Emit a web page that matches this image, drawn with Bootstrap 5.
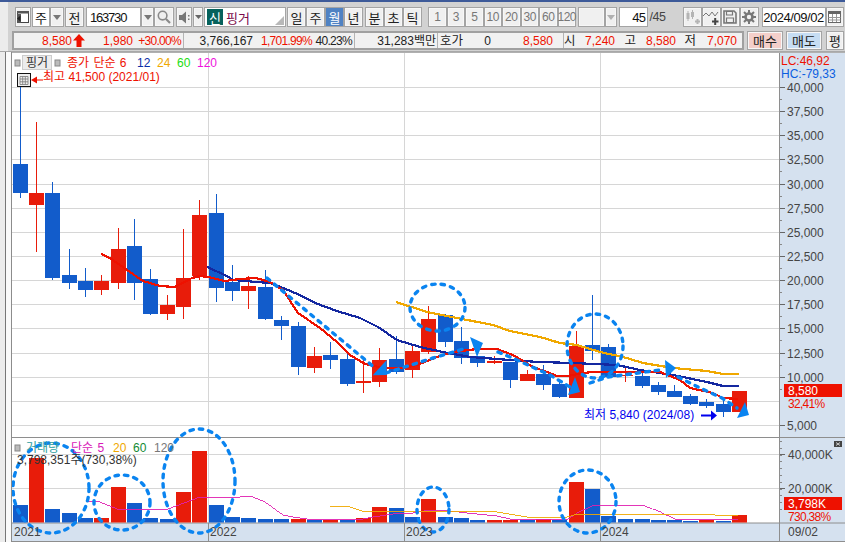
<!DOCTYPE html>
<html lang="ko">
<head>
<meta charset="utf-8">
<title>차트</title>
<link href="https://cdn.jsdelivr.net/npm/bootstrap@5.3.0/dist/css/bootstrap.min.css" rel="stylesheet">
<style>
html,body{width:845px;height:542px;overflow:hidden;margin:0;background:#d2d2d2}
body{font:12px/1 "Liberation Sans","Noto Sans CJK KR",sans-serif;color:#222}
.hts-topline{height:2px;background:#3d5a99}
.hts-head{height:49px;background:#d2d2d2}
.hts-sidehead{width:8px;background:#ececec}
.hts-bars{padding-top:5px;padding-left:7px;gap:4px;min-width:0}
.hts-tools{height:20px}
.hts-b{--bs-btn-padding-x:0;--bs-btn-padding-y:0;--bs-btn-font-size:13px;--bs-btn-border-radius:0;--bs-btn-bg:#f0f0f0;--bs-btn-border-color:#a4a4a4;--bs-btn-color:#222;--bs-btn-hover-bg:#f0f0f0;--bs-btn-hover-border-color:#a4a4a4;--bs-btn-line-height:1;height:20px;width:19px;flex:none;display:flex;align-items:center;justify-content:center;border-width:1px;box-shadow:inset 0 0 0 1px #f7f7f7;font-family:"Noto Sans CJK KR",sans-serif}
.hts-w16{width:16px}.hts-w14{width:14px}.hts-w13{width:13px}.hts-w10{width:10px}.hts-w20{width:20px}.hts-w18{width:18.5px}.hts-w27{width:27px}.hts-w12{width:12px}
.hts-on{--bs-btn-bg:#4f82c3;--bs-btn-color:#fff;--bs-btn-hover-bg:#4f82c3;--bs-btn-hover-color:#fff;box-shadow:none}
.hts-num{--bs-btn-color:#777;--bs-btn-hover-color:#777;font-family:"Liberation Sans",sans-serif;--bs-btn-font-size:12px;letter-spacing:-.5px}
.hts-input{background:#fff;border:1px solid #a4a4a4;height:20px;display:flex;align-items:center;flex:none;font-size:13px;color:#111}
.hts-code{width:55px;padding-left:3px;letter-spacing:-1.2px}
.hts-sel{width:18px;justify-content:center;font-family:"Noto Sans CJK KR",sans-serif}
.hts-name{width:82px;padding-left:2px;position:relative;gap:3px;color:#7a0a4a;font-family:"Noto Sans CJK KR",sans-serif}
.hts-shin{background:#06625c;color:#fff;width:16px;height:16px;display:flex;align-items:center;justify-content:center}
.hts-corner{position:absolute;right:1px;bottom:1px;width:0;height:0;border-left:9px solid transparent;border-bottom:9px solid #b8b8b8}
.hts-cnt{width:29px;justify-content:flex-end;padding-right:1px;letter-spacing:-.6px}
.hts-slash{width:35px;font-size:12.5px;color:#444;padding-left:2px;flex:none;display:flex;align-items:center;letter-spacing:-.4px}
.hts-date{width:64px;justify-content:center;letter-spacing:-.45px}
.hts-m1{margin-left:1px}.hts-m2{margin-left:2px}.hts-m3{margin-left:3px}.hts-m4{margin-left:4px}.hts-m6{margin-left:6px}.hts-m15{margin-left:1.5px}
.hts-info{height:19px;margin-left:-3px}
.hts-panel{width:732px;height:19px;background:#f1f1f1;border:2px solid #a0a0a0;display:flex;font-size:12px;align-items:center;flex:none}
.hts-sec{display:grid;align-items:center;height:15px;border-right:1px solid #b4b4b4;text-align:right;white-space:nowrap;flex:none}
.hts-sec:last-child{border-right:0}
.hts-s1{grid-template-columns:58px 14px 47px 48px;width:170px}
.hts-s2{grid-template-columns:69px 59px 40px;width:171px}
.hts-s3{grid-template-columns:81px;width:83px}
.hts-s4{grid-template-columns:25px 28px 62px;width:126px}
.hts-s5{grid-template-columns:10px 41px 21px 40px 20px 41px;width:176px}
.hts-red{color:#ee1100}
.hts-pct{letter-spacing:-.7px}
.hts-ko{font-size:12.5px;font-family:"Noto Sans CJK KR",sans-serif}
.hts-trade{width:36px;height:19px;--bs-btn-font-size:13px}
.hts-buy{--bs-btn-bg:#f4cfca;--bs-btn-hover-bg:#f4cfca}
.hts-sell{--bs-btn-bg:#c6ddf3;--bs-btn-hover-bg:#c6ddf3}
.hts-ping{width:18px;height:19px}
.hts-chartrow{height:491px;border-top:1px solid #a8a8a8}
.hts-side1{width:5px;background:#ececec;border-right:1px solid #777;box-sizing:content-box}
.hts-side2{width:5px;background:#fafafa;border-right:1px solid #8c8c8c;box-sizing:content-box}
.hts-svg{display:block;width:833px;height:491px;background:#fff;flex:none}
.hts-svg text{font-family:"Liberation Sans","Noto Sans CJK KR",sans-serif;font-size:12px}
.hts-svg .hts-tpct{letter-spacing:-.7px}
.hts-ax{fill:#444}
.hts-rd{fill:#ee1100}
.hts-wh{fill:#fff}
.hts-blue{fill:#0000ee}
</style>
</head>
<body>
<div class="hts-topline"></div>
<div class="d-flex hts-head">
  <div class="hts-sidehead"></div>
  <div class="d-flex flex-column flex-grow-1 hts-bars">
    <div class="d-flex hts-tools">
      <button class="btn hts-b hts-w16" type="button"><svg width="14" height="14" viewBox="0 0 14 14"><rect x="1.5" y="1.5" width="11" height="11" fill="#fff" stroke="#444"/><rect x="1" y="1" width="12" height="2.5" fill="#555"/><rect x="1" y="4" width="4" height="9" fill="#555"/><path d="M1 8.5 4.5 5.5v6z" fill="#222"/></svg></button>
      <div class="hts-input hts-sel hts-m1">주</div>
      <button class="btn hts-b hts-w14" type="button"><svg width="8" height="5" viewBox="0 0 8 5"><path d="M0 0h8L4 5z" fill="#777"/></svg></button>
      <button class="btn hts-b hts-m1" type="button">전</button>
      <div class="hts-input hts-code hts-m2">163730</div>
      <button class="btn hts-b hts-w13" type="button"><svg width="8" height="5" viewBox="0 0 8 5"><path d="M0 0h8L4 5z" fill="#777"/></svg></button>
      <button class="btn hts-b hts-w20" type="button"><svg width="14" height="14" viewBox="0 0 14 14"><circle cx="5.6" cy="5.6" r="4.3" fill="none" stroke="#8a8a8a" stroke-width="1.6"/><path d="M9 9l4 4" stroke="#8a8a8a" stroke-width="2.2"/></svg></button>
      <button class="btn hts-b hts-w16 hts-m2" type="button"><svg width="13" height="13" viewBox="0 0 13 13"><path d="M1 4h3l4-3.500v12L4 9H1z" fill="#777"/><path d="M10 4h1.500v1.500H10zM10 7.500h1.500V9H10z" fill="#777"/></svg></button>
      <button class="btn hts-b hts-w10 hts-m1" type="button"><svg width="7" height="4" viewBox="0 0 7 4"><path d="M0 0h7L3.500 4z" fill="#666"/></svg></button>
      <div class="hts-input hts-name hts-m1"><span class="hts-shin">신</span>핑거<span class="hts-corner"></span></div>
      <button class="btn hts-b hts-m1" type="button">일</button>
      <button class="btn hts-b" type="button">주</button>
      <button class="btn hts-b hts-on" type="button">월</button>
      <button class="btn hts-b" type="button">년</button>
      <button class="btn hts-b hts-m2" type="button">분</button>
      <button class="btn hts-b" type="button">초</button>
      <button class="btn hts-b" type="button">틱</button>
      <button class="btn hts-b hts-num hts-w18 hts-m6" type="button">1</button>
      <button class="btn hts-b hts-num hts-w18" type="button">3</button>
      <button class="btn hts-b hts-num hts-w18" type="button">5</button>
      <button class="btn hts-b hts-num hts-w18" type="button">10</button>
      <button class="btn hts-b hts-num hts-w18" type="button">20</button>
      <button class="btn hts-b hts-num hts-w18" type="button">30</button>
      <button class="btn hts-b hts-num hts-w18" type="button">60</button>
      <button class="btn hts-b hts-num hts-w18" type="button">120</button>
      <button class="btn hts-b hts-w27 hts-m15" type="button" aria-label="빈 선택"></button>
      <button class="btn hts-b hts-w12" type="button"><svg width="8" height="5" viewBox="0 0 8 5"><path d="M0 0h8L4 5z" fill="#b0b0b0"/></svg></button>
      <div class="hts-input hts-cnt hts-m2">45</div>
      <div class="hts-slash">/45</div>
      <button class="btn hts-b" type="button"><svg width="15" height="15" viewBox="0 0 15 15" fill="#b4b4b4"><rect x="1.500" y="3" width="3" height="6"/><rect x="6" y="2" width="3" height="5"/><path d="M3 1v10M7.500 0v9" stroke="#b4b4b4"/><path d="M10 10.500h5v2h-5zM11.500 9h2v5h-2z"/></svg></button>
      <button class="btn hts-b" type="button"><svg width="16" height="15" viewBox="0 0 16 15"><path d="M0 6l3-3 3 3 3-4 3 4 3-4" fill="none" stroke="#777" stroke-width="1"/><path d="M9 10.500h6.500v2H9zM11.200 8h2v7h-2z" fill="#444"/></svg></button>
      <button class="btn hts-b" type="button"><svg width="14" height="14" viewBox="0 0 14 14"><path d="M1 1h10l2 2v10H1z" fill="none" stroke="#777" stroke-width="1.600"/><path d="M3.500 1.500h6v3.500h-6zM3.500 8h7v4.500h-7z" fill="none" stroke="#777" stroke-width="1.200"/></svg></button>
      <button class="btn hts-b" type="button"><svg width="14" height="14" viewBox="0 0 14 14"><circle cx="7" cy="7" r="3.500" fill="none" stroke="#777" stroke-width="2.600"/><path d="M7 0v3M7 11v3M0 7h3M11 7h3M2 2l2 2M10 10l2 2M12 2l-2 2M4 10l-2 2" stroke="#777" stroke-width="2"/></svg></button>
      <div class="hts-input hts-date hts-m3">2024/09/02</div>
      <button class="btn hts-b hts-w18" type="button"><svg width="13" height="12" viewBox="0 0 13 12"><rect x=".5" y=".5" width="12" height="11" fill="#fff" stroke="#666"/><rect x="0" y="0" width="13" height="3" fill="#666"/><path d="M.5 6.500h12M.5 9h12M4.500 3v8M8.500 3v8" stroke="#999"/></svg></button>
    </div>
    <div class="d-flex hts-info">
      <div class="hts-panel">
        <div class="hts-sec hts-s1"><span class="hts-red">8,580</span><svg width="14" height="13" viewBox="0 0 14 13"><path d="M7 0l6 6.500H9.500V13h-5V6.500H1z" fill="#ee1100"/></svg><span class="hts-red">1,980</span><span class="hts-red hts-pct">+30.00%</span></div>
        <div class="hts-sec hts-s2"><span>3,766,167</span><span class="hts-red hts-pct">1,701.99%</span><span class="hts-pct">40.23%</span></div>
        <div class="hts-sec hts-s3"><span>31,283백만</span></div>
        <div class="hts-sec hts-s4"><span class="hts-ko">호가</span><span>0</span><span class="hts-red">8,580</span></div>
        <div class="hts-sec hts-s5"><span class="hts-ko">시</span><span class="hts-red">7,240</span><span class="hts-ko">고</span><span class="hts-red">8,580</span><span class="hts-ko">저</span><span class="hts-red">7,070</span></div>
      </div>
      <button class="btn hts-b hts-trade hts-buy hts-m3" type="button">매수</button>
      <button class="btn hts-b hts-trade hts-sell hts-m3" type="button">매도</button>
      <button class="btn hts-b hts-ping hts-m4" type="button">평</button>
    </div>
  </div>
</div>
<div class="d-flex hts-chartrow">
  <div class="hts-side1"></div>
  <div class="hts-side2"></div>
  <svg id="hts-chart" class="hts-svg" viewBox="12 52 833 491" xmlns="http://www.w3.org/2000/svg" role="img" aria-label="핑거 월봉 차트">
    <g id="hts-grid"></g>
    <g id="hts-vol"></g>
    <g id="hts-candles"></g>
    <g id="hts-lines" fill="none" shape-rendering="crispEdges"></g>
    <g id="hts-notes" fill="none" stroke="#0a84f0" stroke-width="3.400" stroke-dasharray="3.500 6" stroke-linecap="round">
      <ellipse cx="437.500" cy="307.500" rx="27.500" ry="23.500"/>
      <ellipse cx="595" cy="346" rx="28" ry="32"/>
      <ellipse cx="51" cy="488" rx="38" ry="45"/>
      <ellipse cx="122" cy="502.500" rx="28" ry="27.500"/>
      <ellipse cx="199" cy="481" rx="36" ry="52"/>
      <ellipse cx="433" cy="509.500" rx="16" ry="22.500"/>
      <ellipse cx="587.500" cy="501.500" rx="28.500" ry="31.500"/>
      <path d="M267 278 375 368"/>
      <path d="M386 373 433 358 467 348"/>
      <path d="M498 352 517 360 550 375 575 390"/>
      <path d="M590 383 608 377 660 370"/>
      <path d="M678 377 700 388 722 398 737 408"/>
    </g>
    <g fill="#0a84f0">
      <path d="M372.700 375.300 386.700 360V375z"/>
      <path d="M470 337 483 343 477 357z"/>
      <path d="M568 395 575 377 580 392z"/>
      <path d="M665 360 676 368 666 378z"/>
      <path d="M737 418 745 402 749 415z"/>
    </g>
    <g id="hts-text">
      <rect x="15" y="60" width="5" height="6" fill="#bbb" stroke="#888"/>
      <rect x="22.500" y="55.500" width="29" height="14" fill="#ececec" stroke="#ccc"/>
      <rect x="55" y="60" width="5" height="6" fill="#bbb" stroke="#888"/>
      <text x="26" y="67" fill="#333">핑거</text>
      <text x="67" y="66.500" class="hts-rd" word-spacing="1">종가 단순 6</text>
      <text x="137" y="66.500" fill="#0a2ea8">12</text>
      <text x="157" y="66.500" fill="#f0a800">24</text>
      <text x="177" y="66.500" fill="#22dd11">60</text>
      <text x="197" y="66.500" fill="#ee11dd">120</text>
      <rect x="17.500" y="73.500" width="13" height="13" fill="#eee" stroke="#111"/>
      <path d="M20 76.500h8v8h-8zM20 79h8M20 81.800h8M22.700 76.500v8M25.300 76.500v8" fill="none" stroke="#777" stroke-width=".8"/>
      <path d="M31 80l6-3.500v3h6v1h-6v3z" fill="#ee1100"/>
      <text x="43" y="80.500" class="hts-rd">최고 41,500 (2021/01)</text>
      <text x="584" y="419" class="hts-blue">최저 5,840 (2024/08)</text>
      <path d="M701 414.500h10v-4l6 5-6 5v-4h-10z" fill="#0000ee"/>
      <rect x="15" y="445" width="5" height="6" fill="#bbb" stroke="#888"/>
      <text x="26" y="451.500" fill="#2a9d9d">거래량</text>
      <text x="71" y="451.500" fill="#d818b8" word-spacing="1">단순 5</text>
      <text x="113" y="451.500" fill="#f0a800">20</text>
      <text x="133" y="451.500" fill="#128a34">60</text>
      <text x="154" y="451.500" fill="#777">120</text>
      <text x="17" y="464" fill="#333">3,798,351주(730,38%)</text>
      <text x="14" y="536" class="hts-ax">2021</text>
      <text x="210" y="536" class="hts-ax">2022</text>
      <text x="406" y="536" class="hts-ax">2023</text>
      <text x="602" y="536" class="hts-ax">2024</text>
      <text x="788" y="536" class="hts-ax">09/02</text>
      <text x="781" y="65" class="hts-rd">LC:46,92</text>
      <text x="781" y="78" fill="#0a5ee0">HC:-79,33</text>
      <rect x="784" y="384" width="58" height="13" fill="#ee1100"/>
      <text x="788" y="395" class="hts-wh">8,580</text>
      <text x="788" y="408" class="hts-rd hts-tpct">32,41%</text>
      <text x="788" y="458.500" class="hts-ax">40,000K</text>
      <text x="788" y="492.500" class="hts-ax">20,000K</text>
      <rect x="784" y="497" width="58" height="13" fill="#ee1100"/>
      <text x="788" y="508" class="hts-wh">3,798K</text>
      <text x="788" y="521" class="hts-rd hts-tpct">730,38%</text>
      <rect x="834" y="441" width="8" height="6" fill="#444"/>
      <path d="M836 442.500l4 3M840 442.500l-4 3" stroke="#eee" stroke-width=".8"/>
    </g>
  </svg>
</div>
<script src="https://cdn.jsdelivr.net/npm/bootstrap@5.3.0/dist/js/bootstrap.bundle.min.js"></script>
<script>
(function(){
var NS='http://www.w3.org/2000/svg';
function el(p,t,a,txt){var e=document.createElementNS(NS,t);for(var k in a)e.setAttribute(k,a[k]);if(txt)e.textContent=txt;document.getElementById(p).appendChild(e);}
var RED='#e81c0a',BLUE='#125ccb',GRID='#d6d6d6',AXL='#8e8e8e';
el('hts-grid','rect',{x:779.5,y:52,width:66,height:491,fill:'#d5e1ef'});
el('hts-grid','rect',{x:12,y:523,width:833,height:18,fill:'#d5e1ef'});
for(var i=0;i<15;i++){
  var y=Math.round(87+i*24.14)+.5;
  el('hts-grid','line',{x1:12,x2:779,y1:y,y2:y,stroke:GRID,'stroke-width':1});
  if(i===13)continue;
  el('hts-grid','line',{x1:779,x2:785,y1:y,y2:y,stroke:'#666'});
  if(i<14)el('hts-grid','line',{x1:779,x2:782,y1:y+12,y2:y+12,stroke:'#888'});
  var v=40000-i*2500;
  el('hts-text','text',{x:787,y:y+4,'class':'hts-ax'},String(v).replace(/(\d)(\d{3})$/,'$1,$2'));
}
[454.5,488.5].forEach(function(y){el('hts-grid','line',{x1:12,x2:779,y1:y,y2:y,stroke:GRID});el('hts-grid','line',{x1:779,x2:785,y1:y,y2:y,stroke:'#666'});});
for(var t=0;t<11;t++){el('hts-grid','line',{x1:779,x2:782,y1:Math.round(441+t*6.8)+.5,y2:Math.round(441+t*6.8)+.5,stroke:'#888'});}
[208.5,404.5,600.5].forEach(function(x){
  el('hts-grid','line',{x1:x,x2:x,y1:52,y2:523,stroke:GRID});
  el('hts-grid','line',{x1:x,x2:x,y1:523,y2:541,stroke:AXL});
});
el('hts-grid','line',{x1:12,x2:845,y1:437.5,y2:437.5,stroke:AXL});
el('hts-grid','line',{x1:12,x2:845,y1:523,y2:523,stroke:AXL});
el('hts-grid','line',{x1:12,x2:845,y1:541.5,y2:541.5,stroke:AXL});
el('hts-grid','line',{x1:779.5,x2:779.5,y1:52,y2:541,stroke:AXL});
el('hts-grid','line',{x1:12,x2:845,y1:52.5,y2:52.5,stroke:'#b0b0b0'});
var c=[[20.5,'b',164,193,87,198],[36.5,'r',193,205,122,252],[52.5,'b',193,278,182,280],[69.5,'b',275,283,249,289],[85.5,'b',281,290,268,297],[101.5,'r',281,290,275,295],[118.5,'r',249,283,228,289],[134.5,'b',246,283,219,300],[150.5,'b',279,314,269,315],[167.5,'r',305,314,295,320],[183.5,'r',278,307,229,319],[199.5,'r',215,276,200,280],[216,'b',213,288,194,302],[232.5,'b',282,291,265,301],[248.5,'r',286,291,276,309],[265,'b',287,319,270,320],[281.5,'b',320,326,316,340],[298,'b',326,367,322,375],[314.5,'r',356,368,347,373],[330.5,'b',355,360,342,369],[347.5,'b',359,384,351,386],[363.5,'r',381,383,360,393],[379.5,'r',360,382,348,387],[396,'b',359,372,336,374],[412.5,'r',351,370,345,378],[428.5,'r',319,352,306,354],[445,'b',315,342,314,347],[461.5,'b',341,358,327,364],[477.5,'b',356,363,356,367],[494,'r',361,363,356,364],[510.5,'b',362,380,362,388],[527,'r',374,381,370,381],[543.5,'b',374,385,365,390],[559.5,'b',384,397,380,398],[576,'r',346,398,331,398],[592.5,'b',345,351,295,360],[608.5,'b',347,377,344,377],[625.5,'r',375,376,368,382],[642,'b',376,386,370,388],[658,'b',385,392,382,395],[674.5,'b',391,397,385,397],[690.5,'b',396,404,394,405],[706.5,'b',402,406,399,408],[723,'b',404,412,399,417],[739.5,'r',391,412,391,412]];
c.forEach(function(d){
  var col=d[1]==='r'?RED:BLUE,x=Math.round(d[0]-.5)+.5;
  el('hts-candles','line',{x1:x,x2:x,y1:d[4],y2:d[5],stroke:col});
  el('hts-candles','rect',{x:x-7.5,y:d[2],width:15,height:d[3]-d[2],fill:col});
});
var vt=[505,458,509,513,518,518,487,503,518,519,492,451,505,517,518,519,519,519,520,520,520,518,507,508,517,499,517,518,520,520,520,520,519,520,482,489,516,519,519,520,520,521,520,521,515];
var vc='brbbbrrbbbrrbbbbbrbrbrrbbrbbbrrbrbrbbbbbbbrbr';
c.forEach(function(d,i){
  var x=Math.round(d[0]-.5);
  el('hts-vol','rect',{x:x-7,y:vt[i],width:15,height:522.5-vt[i],fill:vc.charAt(i)==='r'?RED:BLUE});
});
function line(col,w,pts){el('hts-lines','polyline',{points:pts,stroke:col,'stroke-width':w});}
line('#f0a800',2.2,'396,302 427,312 457,318 493,325 510,331 540,337 560,343 577,345 600,352 623,357 643,363 673,368 707,371 723,374 739,374');
line('#1428a0',2.2,'207,267 227,276 233,280 257,282 270,283 283,288 300,295 315,303 337,311 360,318 378,327 397,340 420,347 443,352 470,357 497,359 523,361 540,362 573,363 617,365 640,370 673,375 707,382 723,386 739,386');
line('#ee1100',2.2,'101,254 110,258 127,270 143,281 160,286 175,287 192,278 200,276 208,277 225,281 240,279 256,278 270,282 283,290 298,313 320,328 337,342 350,355 365,364 383,368 403,368 417,365 437,357 453,352 477,349 497,349 513,355 533,367 547,372 557,376 568,376 583,373 593,372 640,372 660,372 680,380 690,388 713,393 723,398 738,399');
line('#e020b0',.9,'86,501 100,502 117,509 150,509 168,509 200,497 240,497 250,496 265,502 283,515 293,517 307,519 363,519 373,517 393,514 413,513 430,510 450,511 467,513 497,516 510,519 567,520 577,513 592,506 642,505 662,513 675,519 738,520');
line('#f0a800',.9,'330,506 350,507 362,511 497,512 527,517 567,517 578,514 682,514 715,515 738,516');
})();
</script>
</body>
</html>
